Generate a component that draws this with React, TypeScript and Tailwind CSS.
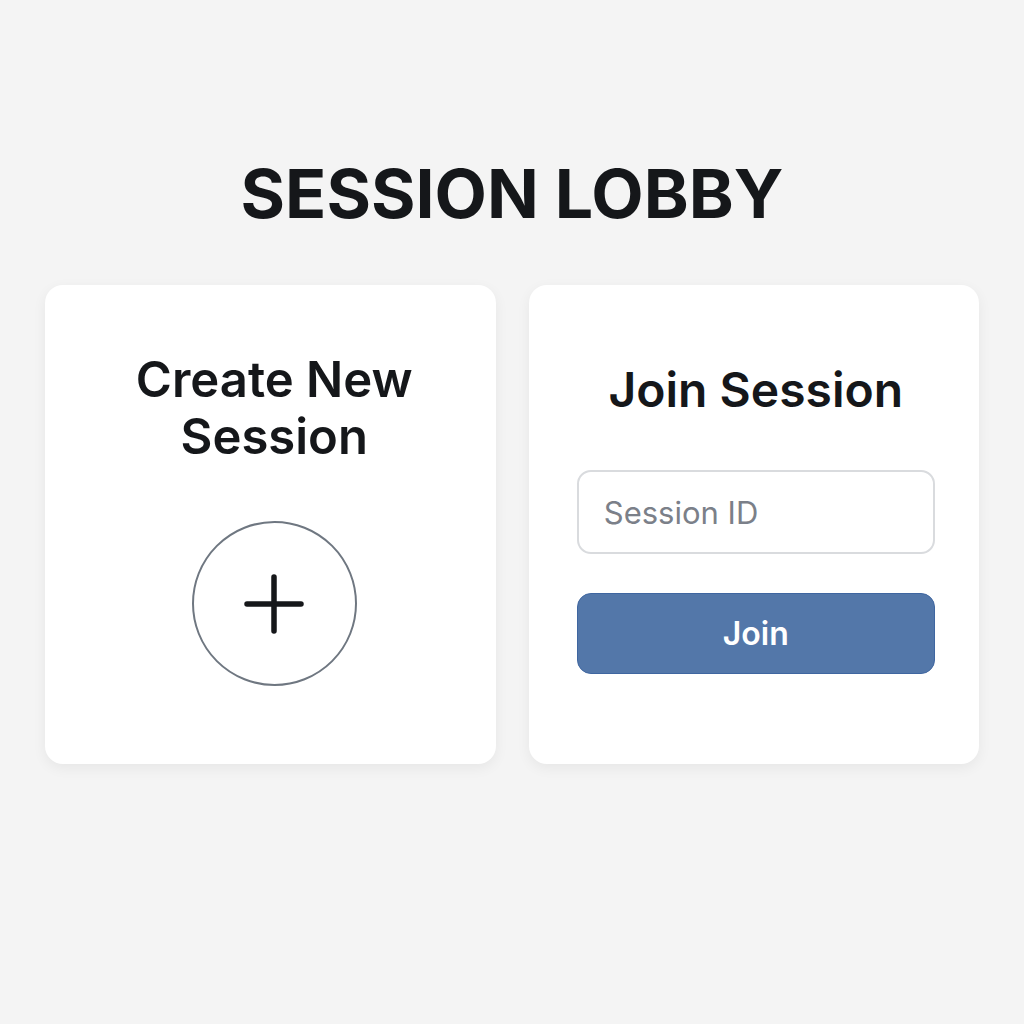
import React from "react";

const App = () => {
  return (
    <div className="min-h-screen bg-[#f4f4f4] font-['Inter',sans-serif] text-[#15171a]">
      <h1 className="pt-[159px] text-center text-[68px] font-bold leading-none">
        SESSION LOBBY
      </h1>

      <div className="mt-[58px] grid grid-cols-2 gap-[33px] px-[45px]">
        {/* Create card */}
        <div className="flex h-[479px] flex-col items-center rounded-[18px] bg-white pl-[8px] pt-[66px] shadow-[0_4px_14px_rgba(0,0,0,0.06)]">
          <h2 className="text-center text-[49px] font-semibold leading-[57px]">
            Create New
            <br />
            Session
          </h2>
          <button className="mt-[56px] flex h-[165px] w-[165px] items-center justify-center rounded-full border-[2.5px] border-[#6f7781] bg-white">
            <svg width="60" height="60" viewBox="0 0 60 60" fill="none">
              <path
                d="M30 3v54M3 30h54"
                stroke="#15171a"
                strokeWidth="5.5"
                strokeLinecap="round"
              />
            </svg>
          </button>
        </div>

        {/* Join card */}
        <div className="flex h-[479px] flex-col items-center rounded-[18px] bg-white pl-[4px] pt-[76px] shadow-[0_4px_14px_rgba(0,0,0,0.06)]">
          <h2 className="text-center text-[48px] font-semibold leading-[57px]">
            Join Session
          </h2>
          <input
            type="text"
            placeholder="Session ID"
            className="mt-[52px] h-[84px] w-[358px] rounded-[14px] border-2 border-[#d9dbde] bg-white px-[25px] text-[31px] text-[#15171a] outline-none placeholder:text-[#7b8089]"
          />
          <button className="mt-[39px] h-[81px] w-[358px] rounded-[14px] border border-[#3f66a0] bg-[#5377a9] text-[32px] font-semibold text-white">
            Join
          </button>
        </div>
      </div>
    </div>
  );
};

export default App;
